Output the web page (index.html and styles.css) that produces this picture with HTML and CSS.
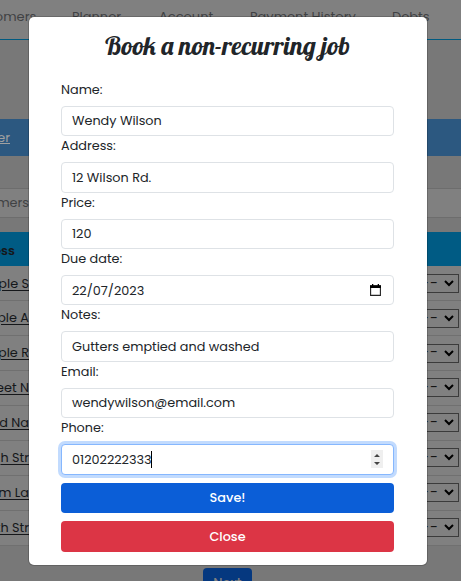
FILE: index.html
```html
<!DOCTYPE html>
<html lang="en">
<head>
<meta charset="utf-8">
<title>Book a non-recurring job</title>
<link rel="stylesheet" href="styles.css">
</head>
<body>
<div class="page">
  <nav class="nav"><span class="n1">Customers</span><span>Planner</span><span>Account</span><span>Payment History</span><span>Debts</span></nav>
  <div class="banner"><a>er</a></div>
  <div class="search"><span>mers</span></div>
  <div class="table">
    <div class="row head"><span class="cell">ess</span></div>
    <div class="row"><a class="cell">ple S</a><span class="select">---<svg viewBox="0 0 10 7"><path d="M1 1l4 4 4-4"/></svg></span></div>
    <div class="row"><a class="cell">ple A</a><span class="select">---<svg viewBox="0 0 10 7"><path d="M1 1l4 4 4-4"/></svg></span></div>
    <div class="row"><a class="cell">ple R</a><span class="select">---<svg viewBox="0 0 10 7"><path d="M1 1l4 4 4-4"/></svg></span></div>
    <div class="row"><a class="cell">eet N</a><span class="select">---<svg viewBox="0 0 10 7"><path d="M1 1l4 4 4-4"/></svg></span></div>
    <div class="row"><a class="cell">d Na</a><span class="select">---<svg viewBox="0 0 10 7"><path d="M1 1l4 4 4-4"/></svg></span></div>
    <div class="row"><a class="cell">h Str</a><span class="select">---<svg viewBox="0 0 10 7"><path d="M1 1l4 4 4-4"/></svg></span></div>
    <div class="row"><a class="cell">m La</a><span class="select">---<svg viewBox="0 0 10 7"><path d="M1 1l4 4 4-4"/></svg></span></div>
    <div class="row"><a class="cell">th Str</a><span class="select">---<svg viewBox="0 0 10 7"><path d="M1 1l4 4 4-4"/></svg></span></div>
  </div>
  <div class="next">Next</div>
</div>
<div class="modal">
  <h1>Book a non-recurring job</h1>
  <div class="field"><label>Name:</label><div class="input"><span>Wendy Wilson</span></div></div>
  <div class="field"><label>Address:</label><div class="input"><span>12 Wilson Rd.</span></div></div>
  <div class="field"><label>Price:</label><div class="input"><span>120</span></div></div>
  <div class="field"><label>Due date:</label><div class="input"><span>22/07/2023</span><svg class="cal" viewBox="0 0 11 12"><path d="M.6 2h9.8v9.4H.6z" fill="none" stroke="#222" stroke-width="1.1"/><path d="M0 1.2h11V4H0zM2 0h1.3v2H2zM7.7 0H9v2H7.7z"/></svg></div></div>
  <div class="field"><label>Notes:</label><div class="input"><span>Gutters emptied and washed</span></div></div>
  <div class="field"><label>Email:</label><div class="input"><span>wendywilson@email.com</span></div></div>
  <div class="field"><label>Phone:</label><div class="input focus"><span>01202222333</span><i class="caret"></i><svg class="spin" viewBox="0 0 12 18"><path d="M0 0h12v18H0z" fill="#efefef"/><path d="M3 7l3-3 3 3zM3 12l3 3 3-3z" fill="#444"/></svg></div></div>
  <div class="btn save">Save!</div>
  <div class="btn close">Close</div>
</div>
</body>
</html>
```
FILE: styles.css
```css
* { box-sizing: border-box; }
body { margin: 0; width: 461px; height: 581px; overflow: hidden; background: #787878; font: 12.8px/19.2px Poppins, Inter, sans-serif; color: #212529; }
.page { width: 461px; height: 581px; overflow: hidden; }
.nav { height: 40px; padding-top: 7px; background: #808080; border-bottom: 1px solid #005a80; color: #404244; display: grid; grid-template-columns: 72px 87px 91px 142px 69px; font-size: 13px; white-space: nowrap; }
.n1 { justify-self: start; margin-left: -35px; }
.banner { margin-top: 79px; height: 37px; background: #2c5880; padding-top: 9px; color: #a0a0a0; }
.banner a { display: flex; justify-content: flex-end; width: 10px; text-decoration: underline; }
.search { margin-top: 32px; height: 30px; background: #808080; border: solid #6d6d6d; border-width: 1px 0; padding-top: 4px; color: #404244; }
.search span { display: flex; justify-content: flex-end; width: 29px; white-space: nowrap; }
.table { margin-top: 14px; background: #808080; }
.row { height: 34.95px; border-bottom: 1px solid #707070; display: flex; justify-content: space-between; align-items: center; padding-right: 2px; }
.head { background: #005b84; height: 34.2px; padding-top: 4px; border: 0; font-weight: 600; color: #111; }
.cell { width: 29px; display: flex; justify-content: flex-end; white-space: nowrap; text-decoration: underline; text-underline-offset: 2px; color: #15171a; }
.head .cell { width: 15px; text-decoration: none; }
.select { width: 75px; height: 19px; border: 1px solid #3b3b3b; display: flex; align-items: center; justify-content: flex-end; padding-right: 4px; gap: 5px; color: #151515; font-size: 14.5px; letter-spacing: 1px; }
.select svg { width: 10px; height: 7px; fill: none; stroke: #000; stroke-width: 2; }
.next { width: 49px; height: 30px; margin: 22px 0 0 203px; border-radius: 4px; background: #05387f; color: #808080; text-align: center; padding-top: 5px; font-weight: 500; }
.modal { position: absolute; left: 29px; top: 17px; width: 398px; height: 548px; padding: 16px 33px 0 32px; border-radius: 5px; background: #fff; box-shadow: 0 0 0 1px rgba(0,0,0,.18); }
h1 { height: 46.8px; margin: 0; font: 400 25.6px/24px Lobster, "Liberation Serif", serif; text-align: center; white-space: nowrap; }
.field { height: 56.4px; }
label { display: block; height: 26px; line-height: 19px; }
.input { height: 30.4px; border: 1px solid #dee2e6; border-radius: 4px; padding: 0 10px; display: flex; align-items: center; background: #fff; }
.input span { white-space: nowrap; }
.focus { border-color: #86b7fe; box-shadow: 0 0 0 3px #c2dbfe; }
.caret { width: 1px; height: 17px; margin-left: -1px; background: #000; }
.cal { width: 11px; height: 12px; margin-left: auto; margin-right: 2px; }
.spin { width: 12px; height: 18px; margin-left: auto; }
.btn { height: 30px; border-radius: 4px; color: #fff; font-weight: 500; display: flex; align-items: center; justify-content: center; }
.save { margin-top: 8.4px; background: #0b5ed7; }
.close { margin-top: 8px; height: 31px; background: #dc3545; }
```
